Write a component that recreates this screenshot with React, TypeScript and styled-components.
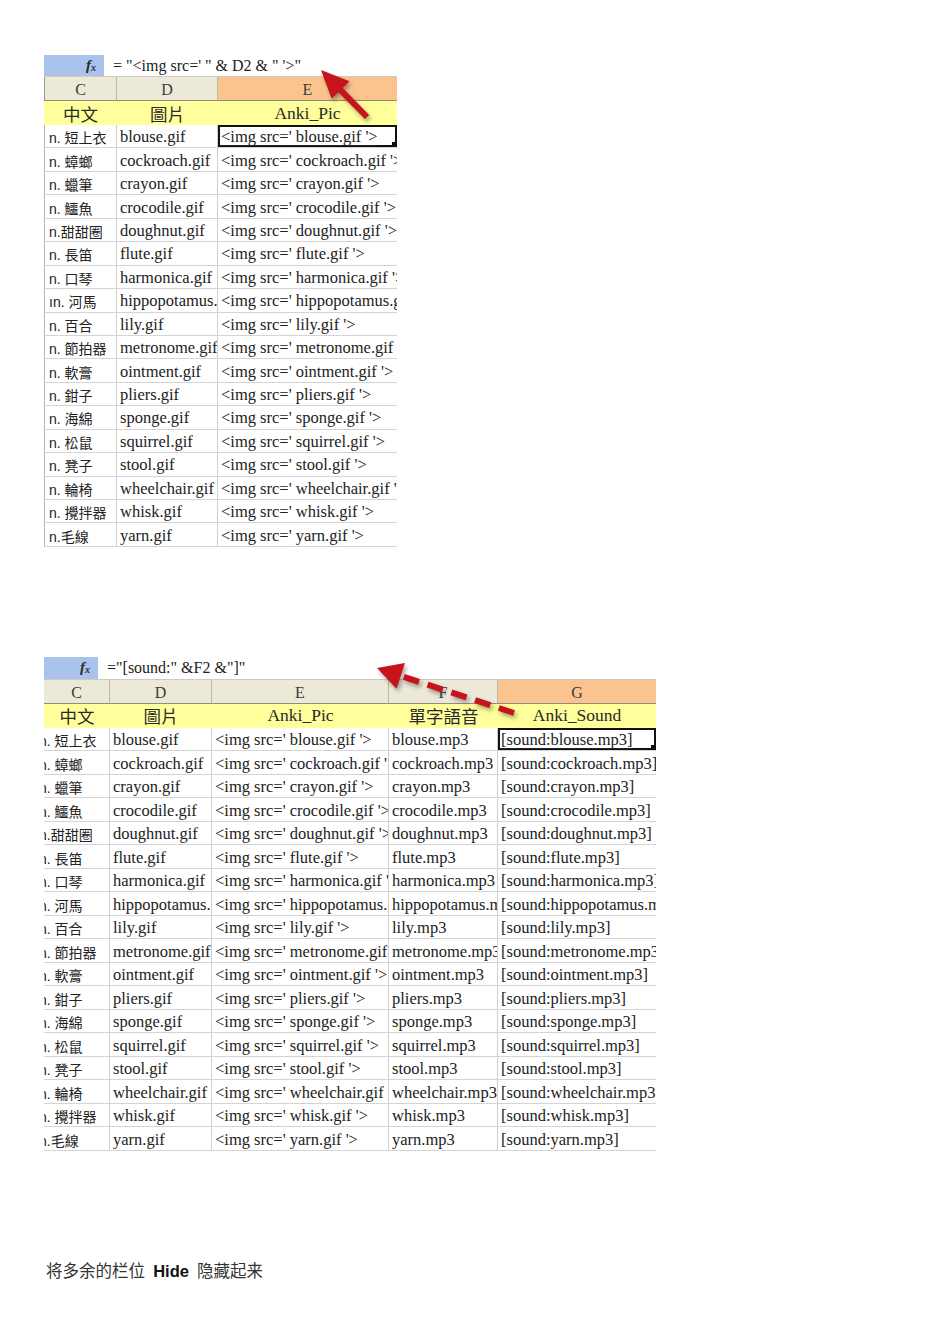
import React from 'react';
import styled, { createGlobalStyle } from 'styled-components';

const GlobalStyle = createGlobalStyle`
  html, body {
    margin: 0;
    padding: 0;
    background: #fff;
  }
  body {
    font-family: "Liberation Serif", "Noto Sans CJK TC", serif;
    color: #222;
  }
`;

type Word = { en: string; zh: string };

const words: Word[] = [
  { en: 'blouse', zh: 'n. 短上衣' },
  { en: 'cockroach', zh: 'n. 蟑螂' },
  { en: 'crayon', zh: 'n. 蠟筆' },
  { en: 'crocodile', zh: 'n. 鱷魚' },
  { en: 'doughnut', zh: 'n.甜甜圈' },
  { en: 'flute', zh: 'n. 長笛' },
  { en: 'harmonica', zh: 'n. 口琴' },
  { en: 'hippopotamus', zh: 'n. 河馬' },
  { en: 'lily', zh: 'n. 百合' },
  { en: 'metronome', zh: 'n. 節拍器' },
  { en: 'ointment', zh: 'n. 軟膏' },
  { en: 'pliers', zh: 'n. 鉗子' },
  { en: 'sponge', zh: 'n. 海綿' },
  { en: 'squirrel', zh: 'n. 松鼠' },
  { en: 'stool', zh: 'n. 凳子' },
  { en: 'wheelchair', zh: 'n. 輪椅' },
  { en: 'whisk', zh: 'n. 攪拌器' },
  { en: 'yarn', zh: 'n.毛線' },
];

type SheetConfig = {
  formula: string;
  nameWidth: number;
  widths: number[];
  letters: string[];
  titles: string[];
  active: number;
  lead: boolean;
  zhIndent: number;
  rowHeights: string;
  cells: (w: Word) => string[];
  arrow: { tip: [number, number]; tail: [number, number]; head: number; wing: number; dash: string };
};

const sheets: SheetConfig[] = [
  {
    formula: `= "<img src=' " & D2 & " '>"`,
    nameWidth: 60,
    widths: [73, 101, 179],
    letters: ['C', 'D', 'E'],
    titles: ['中文', '圖片', 'Anki_Pic'],
    active: 2,
    lead: true,
    zhIndent: 4,
    rowHeights: '22px 24px 24px repeat(18, 23.44px)',
    cells: w => [
      w.en === 'hippopotamus' ? 'ın. 河馬' : w.zh,
      `${w.en}.gif`,
      `<img src=' ${w.en}.gif '>`,
    ],
    arrow: { tip: [277, 15], tail: [323, 62], head: 28, wing: 25, dash: '40 4' },
  },
  {
    formula: `="[sound:" &F2 &"]"`,
    nameWidth: 54,
    widths: [66, 102, 177, 109, 158],
    letters: ['C', 'D', 'E', 'F', 'G'],
    titles: ['中文', '圖片', 'Anki_Pic', '單字語音', 'Anki_Sound'],
    active: 4,
    lead: false,
    zhIndent: -5,
    rowHeights: '23px 24px 24px repeat(18, 23.5px)',
    cells: w => [
      w.zh,
      `${w.en}.gif`,
      `<img src=' ${w.en}.gif '>`,
      `${w.en}.mp3`,
      `[sound:${w.en}.mp3]`,
    ],
    arrow: { tip: [333, 11], tail: [470, 56], head: 25, wing: 27, dash: '16 9' },
  },
];

const Arrow = ({ tip, tail, head, wing, dash }: SheetConfig['arrow']) => {
  const dx = tip[0] - tail[0];
  const dy = tip[1] - tail[1];
  const len = Math.hypot(dx, dy);
  const ux = dx / len;
  const uy = dy / len;
  const bx = tip[0] - ux * head;
  const by = tip[1] - uy * head;
  const nx = -uy * (wing / 2);
  const ny = ux * (wing / 2);
  const points = `${tip[0]},${tip[1]} ${bx + nx},${by + ny} ${bx - nx},${by - ny}`;
  return (
    <ArrowLayer width="700" height="120">
      <line
        x1={tail[0]}
        y1={tail[1]}
        x2={bx + ux * 2}
        y2={by + uy * 2}
        stroke="#c8121c"
        strokeWidth="6"
        strokeDasharray={dash}
      />
      <polygon points={points} fill="#c8121c" />
    </ArrowLayer>
  );
};

const Sheet = ({ cfg }: { cfg: SheetConfig }) => {
  const last = cfg.widths.length - 1;
  return (
    <Grid $cols={cfg.widths.map(w => `${w}px`).join(' ')} $rows={cfg.rowHeights}>
      <FormulaBar>
        <NameBox $width={cfg.nameWidth}>
          <Fx>
            f<small>x</small>
          </Fx>
        </NameBox>
        <FormulaText>{cfg.formula}</FormulaText>
      </FormulaBar>
      {cfg.letters.map((l, i) => (
        <ColumnHead key={l} $active={i === cfg.active} $last={i === last} $lead={cfg.lead && i === 0}>
          {l}
        </ColumnHead>
      ))}
      {cfg.titles.map(t => (
        <TitleCell key={t}>{t}</TitleCell>
      ))}
      {words.map((w, r) =>
        cfg.cells(w).map((text, i) => (
          <DataCell
            key={`${r}-${i}`}
            $zh={i === 0}
            $indent={i === 0 ? cfg.zhIndent : 3}
            $last={i === last}
            $lead={cfg.lead && i === 0}
            $selected={r === 0 && i === last}
          >
            {text}
          </DataCell>
        ))
      )}
      <Arrow {...cfg.arrow} />
    </Grid>
  );
};

const App = () => (
  <>
    <GlobalStyle />
    <Page>
      {sheets.map((s, i) => (
        <Sheet key={i} cfg={s} />
      ))}
      <Caption>
        将多余的栏位 <Strong>Hide</Strong> 隐藏起来
      </Caption>
    </Page>
  </>
);

const Page = styled.div`
  display: flex;
  flex-direction: column;
  align-items: flex-start;
  gap: 110px;
  padding: 55px 0 60px 44px;
`;

const Grid = styled.div<{ $cols: string; $rows: string }>`
  position: relative;
  display: grid;
  grid-template-columns: ${p => p.$cols};
  grid-template-rows: ${p => p.$rows};
`;

const FormulaBar = styled.div`
  grid-column: 1 / -1;
  display: flex;
  align-items: stretch;
  background: #fff;
  border-bottom: 1px solid #cfccbf;
`;

const NameBox = styled.div<{ $width: number }>`
  width: ${p => p.$width}px;
  display: flex;
  align-items: center;
  justify-content: flex-end;
  padding-right: 8px;
  box-sizing: border-box;
  background: #a9c3ec;
`;

const Fx = styled.span`
  font-family: "Liberation Serif", serif;
  font-style: italic;
  font-weight: bold;
  font-size: 15px;
  color: #2b2b2b;
  small {
    font-size: 10px;
    position: relative;
    top: 1px;
  }
`;

const FormulaText = styled.div`
  display: flex;
  align-items: center;
  margin-left: 9px;
  font-size: 16px;
  white-space: pre;
  color: #222;
`;

const ColumnHead = styled.div<{ $active: boolean; $last: boolean; $lead: boolean }>`
  display: flex;
  align-items: center;
  justify-content: center;
  box-sizing: border-box;
  padding-top: 3px;
  background: ${p => (p.$active ? '#fbc48e' : '#ece9d8')};
  border-right: ${p => (p.$last ? 'none' : '1px solid #bcb8a8')};
  border-left: ${p => (p.$lead ? '1px solid #9d9a8c' : 'none')};
  border-bottom: 1px solid #8f8c7f;
  font-size: 16px;
  color: #3a3a3a;
`;

const TitleCell = styled.div`
  display: flex;
  align-items: center;
  justify-content: center;
  background: #ffff9c;
  font-size: 17.5px;
  color: #2a2a2a;
  white-space: nowrap;
  overflow: hidden;
`;

const DataCell = styled.div<{
  $zh: boolean;
  $indent: number;
  $last: boolean;
  $lead: boolean;
  $selected: boolean;
}>`
  position: relative;
  display: flex;
  align-items: center;
  box-sizing: border-box;
  padding-top: 2px;
  padding-left: ${p => (p.$indent > 0 ? p.$indent : 0)}px;
  text-indent: ${p => (p.$indent < 0 ? p.$indent : 0)}px;
  border-right: ${p => (p.$last ? 'none' : '1px solid #cfcfcf')};
  border-left: ${p => (p.$lead ? '1px solid #b8b8b8' : 'none')};
  border-bottom: 1px solid #d4d4d4;
  box-shadow: ${p => (p.$selected ? 'inset 0 0 0 2px #111' : 'none')};
  font-family: ${p =>
    p.$zh
      ? '"Liberation Sans", "Noto Sans CJK TC", sans-serif'
      : '"Liberation Serif", "Noto Sans CJK TC", serif'};
  font-size: ${p => (p.$zh ? 14 : 16.5)}px;
  color: #222;
  white-space: pre;
  overflow: hidden;
  ${p =>
    p.$selected &&
    `
    text-decoration: underline;
    text-decoration-thickness: 1px;
    text-underline-offset: 3px;
    &::after {
      content: '';
      position: absolute;
      right: 0;
      bottom: 0;
      width: 5px;
      height: 5px;
      background: #111;
    }
  `}
`;

const ArrowLayer = styled.svg`
  position: absolute;
  top: 0;
  left: 0;
  overflow: visible;
  pointer-events: none;
  filter: drop-shadow(2px 3px 2px rgba(0, 0, 0, 0.35));
`;

const Caption = styled.div`
  margin-left: 2px;
  font-family: "Liberation Serif", "Noto Sans CJK SC", serif;
  font-size: 16.5px;
  line-height: 20px;
  color: #333;
  white-space: pre;
`;

const Strong = styled.b`
  font-family: "Liberation Sans", sans-serif;
  font-weight: bold;
  color: #111;
  padding: 0 4px;
`;

export default App;
